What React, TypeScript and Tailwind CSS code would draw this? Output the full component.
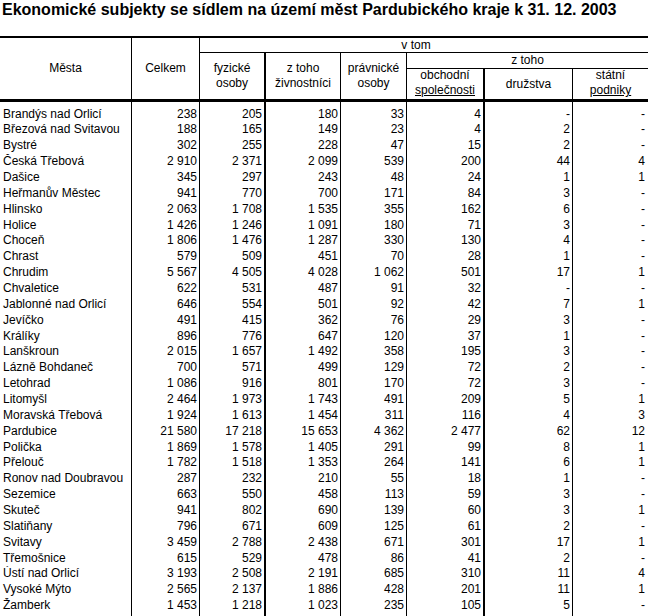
const rows: [string, ...string[]][] = [
  ["Brandýs nad Orlicí", "238", "205", "180", "33", "4", "-", "-"],
  ["Březová nad Svitavou", "188", "165", "149", "23", "4", "2", "-"],
  ["Bystré", "302", "255", "228", "47", "15", "2", "-"],
  ["Česká Třebová", "2 910", "2 371", "2 099", "539", "200", "44", "4"],
  ["Dašice", "345", "297", "243", "48", "24", "1", "1"],
  ["Heřmanův Městec", "941", "770", "700", "171", "84", "3", "-"],
  ["Hlinsko", "2 063", "1 708", "1 535", "355", "162", "6", "-"],
  ["Holice", "1 426", "1 246", "1 091", "180", "71", "3", "-"],
  ["Choceň", "1 806", "1 476", "1 287", "330", "130", "4", "-"],
  ["Chrast", "579", "509", "451", "70", "28", "1", "-"],
  ["Chrudim", "5 567", "4 505", "4 028", "1 062", "501", "17", "1"],
  ["Chvaletice", "622", "531", "487", "91", "32", "-", "-"],
  ["Jablonné nad Orlicí", "646", "554", "501", "92", "42", "7", "1"],
  ["Jevíčko", "491", "415", "362", "76", "29", "3", "-"],
  ["Králíky", "896", "776", "647", "120", "37", "1", "-"],
  ["Lanškroun", "2 015", "1 657", "1 492", "358", "195", "3", "-"],
  ["Lázně Bohdaneč", "700", "571", "499", "129", "72", "2", "-"],
  ["Letohrad", "1 086", "916", "801", "170", "72", "3", "-"],
  ["Litomyšl", "2 464", "1 973", "1 743", "491", "209", "5", "1"],
  ["Moravská Třebová", "1 924", "1 613", "1 454", "311", "116", "4", "3"],
  ["Pardubice", "21 580", "17 218", "15 653", "4 362", "2 477", "62", "12"],
  ["Polička", "1 869", "1 578", "1 405", "291", "99", "8", "1"],
  ["Přelouč", "1 782", "1 518", "1 353", "264", "141", "6", "1"],
  ["Ronov nad Doubravou", "287", "232", "210", "55", "18", "1", "-"],
  ["Sezemice", "663", "550", "458", "113", "59", "3", "-"],
  ["Skuteč", "941", "802", "690", "139", "60", "3", "1"],
  ["Slatiňany", "796", "671", "609", "125", "61", "2", "-"],
  ["Svitavy", "3 459", "2 788", "2 438", "671", "301", "17", "1"],
  ["Třemošnice", "615", "529", "478", "86", "41", "2", "-"],
  ["Ústí nad Orlicí", "3 193", "2 508", "2 191", "685", "310", "11", "4"],
  ["Vysoké Mýto", "2 565", "2 137", "1 886", "428", "201", "11", "1"],
  ["Žamberk", "1 453", "1 218", "1 023", "235", "105", "5", "-"]
];

// right-hand rule of each column; thick ones split the groups
const colBorders = [
  "border-r border-black",
  "border-r border-black",
  "border-r-2 border-black",
  "border-r border-black",
  "border-r border-black",
  "border-r-2 border-black",
  "border-r border-black",
  ""
];

const cols = "grid grid-cols-[132px_68px_66px_75px_66px_78px_88px_75px]";

export default function App() {
  return (
    <div className="h-[616px] w-[648px] overflow-hidden bg-white font-['Liberation_Sans',Arial,sans-serif] text-black">
      <h1 className="pl-[2px] text-[16px] font-bold leading-[20px]">
        Ekonomické subjekty se sídlem na území měst Pardubického kraje k 31. 12. 2003
      </h1>

      <div
        className={`${cols} mt-[16px] grid-rows-[15px_16px_30px] border-t-2 border-b-[3px] border-black text-center text-[12px] leading-[15px]`}
      >
        <div className="col-start-1 row-span-3 row-start-1 flex items-center justify-center border-r border-black">
          Města
        </div>
        <div className="col-start-2 row-span-3 row-start-1 flex items-center justify-center border-r border-black">
          Celkem
        </div>
        <div className="col-span-6 col-start-3 row-start-1 flex items-center justify-center border-b border-black pr-4">
          v tom
        </div>
        <div className="col-start-3 row-span-2 row-start-2 flex items-center justify-center border-r-2 border-black">
          <span>
            fyzické
            <br />
            osoby
          </span>
        </div>
        <div className="col-start-4 row-span-2 row-start-2 flex items-center justify-center border-r border-black">
          <span>
            z toho
            <br />
            živnostníci
          </span>
        </div>
        <div className="col-start-5 row-span-2 row-start-2 flex items-center justify-center border-r border-black">
          <span>
            právnické
            <br />
            osoby
          </span>
        </div>
        <div className="col-span-3 col-start-6 row-start-2 flex items-center justify-center border-b border-black">
          z toho
        </div>
        <div className="col-start-6 row-start-3 flex items-end justify-center border-r-2 border-black pb-[1px]">
          <span>
            obchodní
            <br />
            <span className="underline">společnosti</span>
          </span>
        </div>
        <div className="col-start-7 row-start-3 flex items-center justify-center border-r border-black">
          družstva
        </div>
        <div className="col-start-8 row-start-3 flex items-end justify-center pb-[1px]">
          <span>
            státní
            <br />
            <span className="underline">podniky</span>
          </span>
        </div>
      </div>

      <div className="text-[12px] leading-[15.87px]">
        <div className={`${cols} h-[4.5px]`}>
          {colBorders.map((b, i) => (
            <div key={i} className={b} />
          ))}
        </div>
        {rows.map((row) => (
          <div key={row[0]} className={`${cols} h-[15.87px]`}>
            {row.map((cell, i) => (
              <div
                key={i}
                className={
                  i === 0
                    ? `${colBorders[i]} truncate pl-[3px] text-left`
                    : `${colBorders[i]} pr-[2px] text-right ${i === 7 ? "pr-[3px]" : ""}`
                }
              >
                {cell}
              </div>
            ))}
          </div>
        ))}
        <div className={`${cols} h-[20px]`}>
          {colBorders.map((b, i) => (
            <div key={i} className={b} />
          ))}
        </div>
      </div>
    </div>
  );
}
